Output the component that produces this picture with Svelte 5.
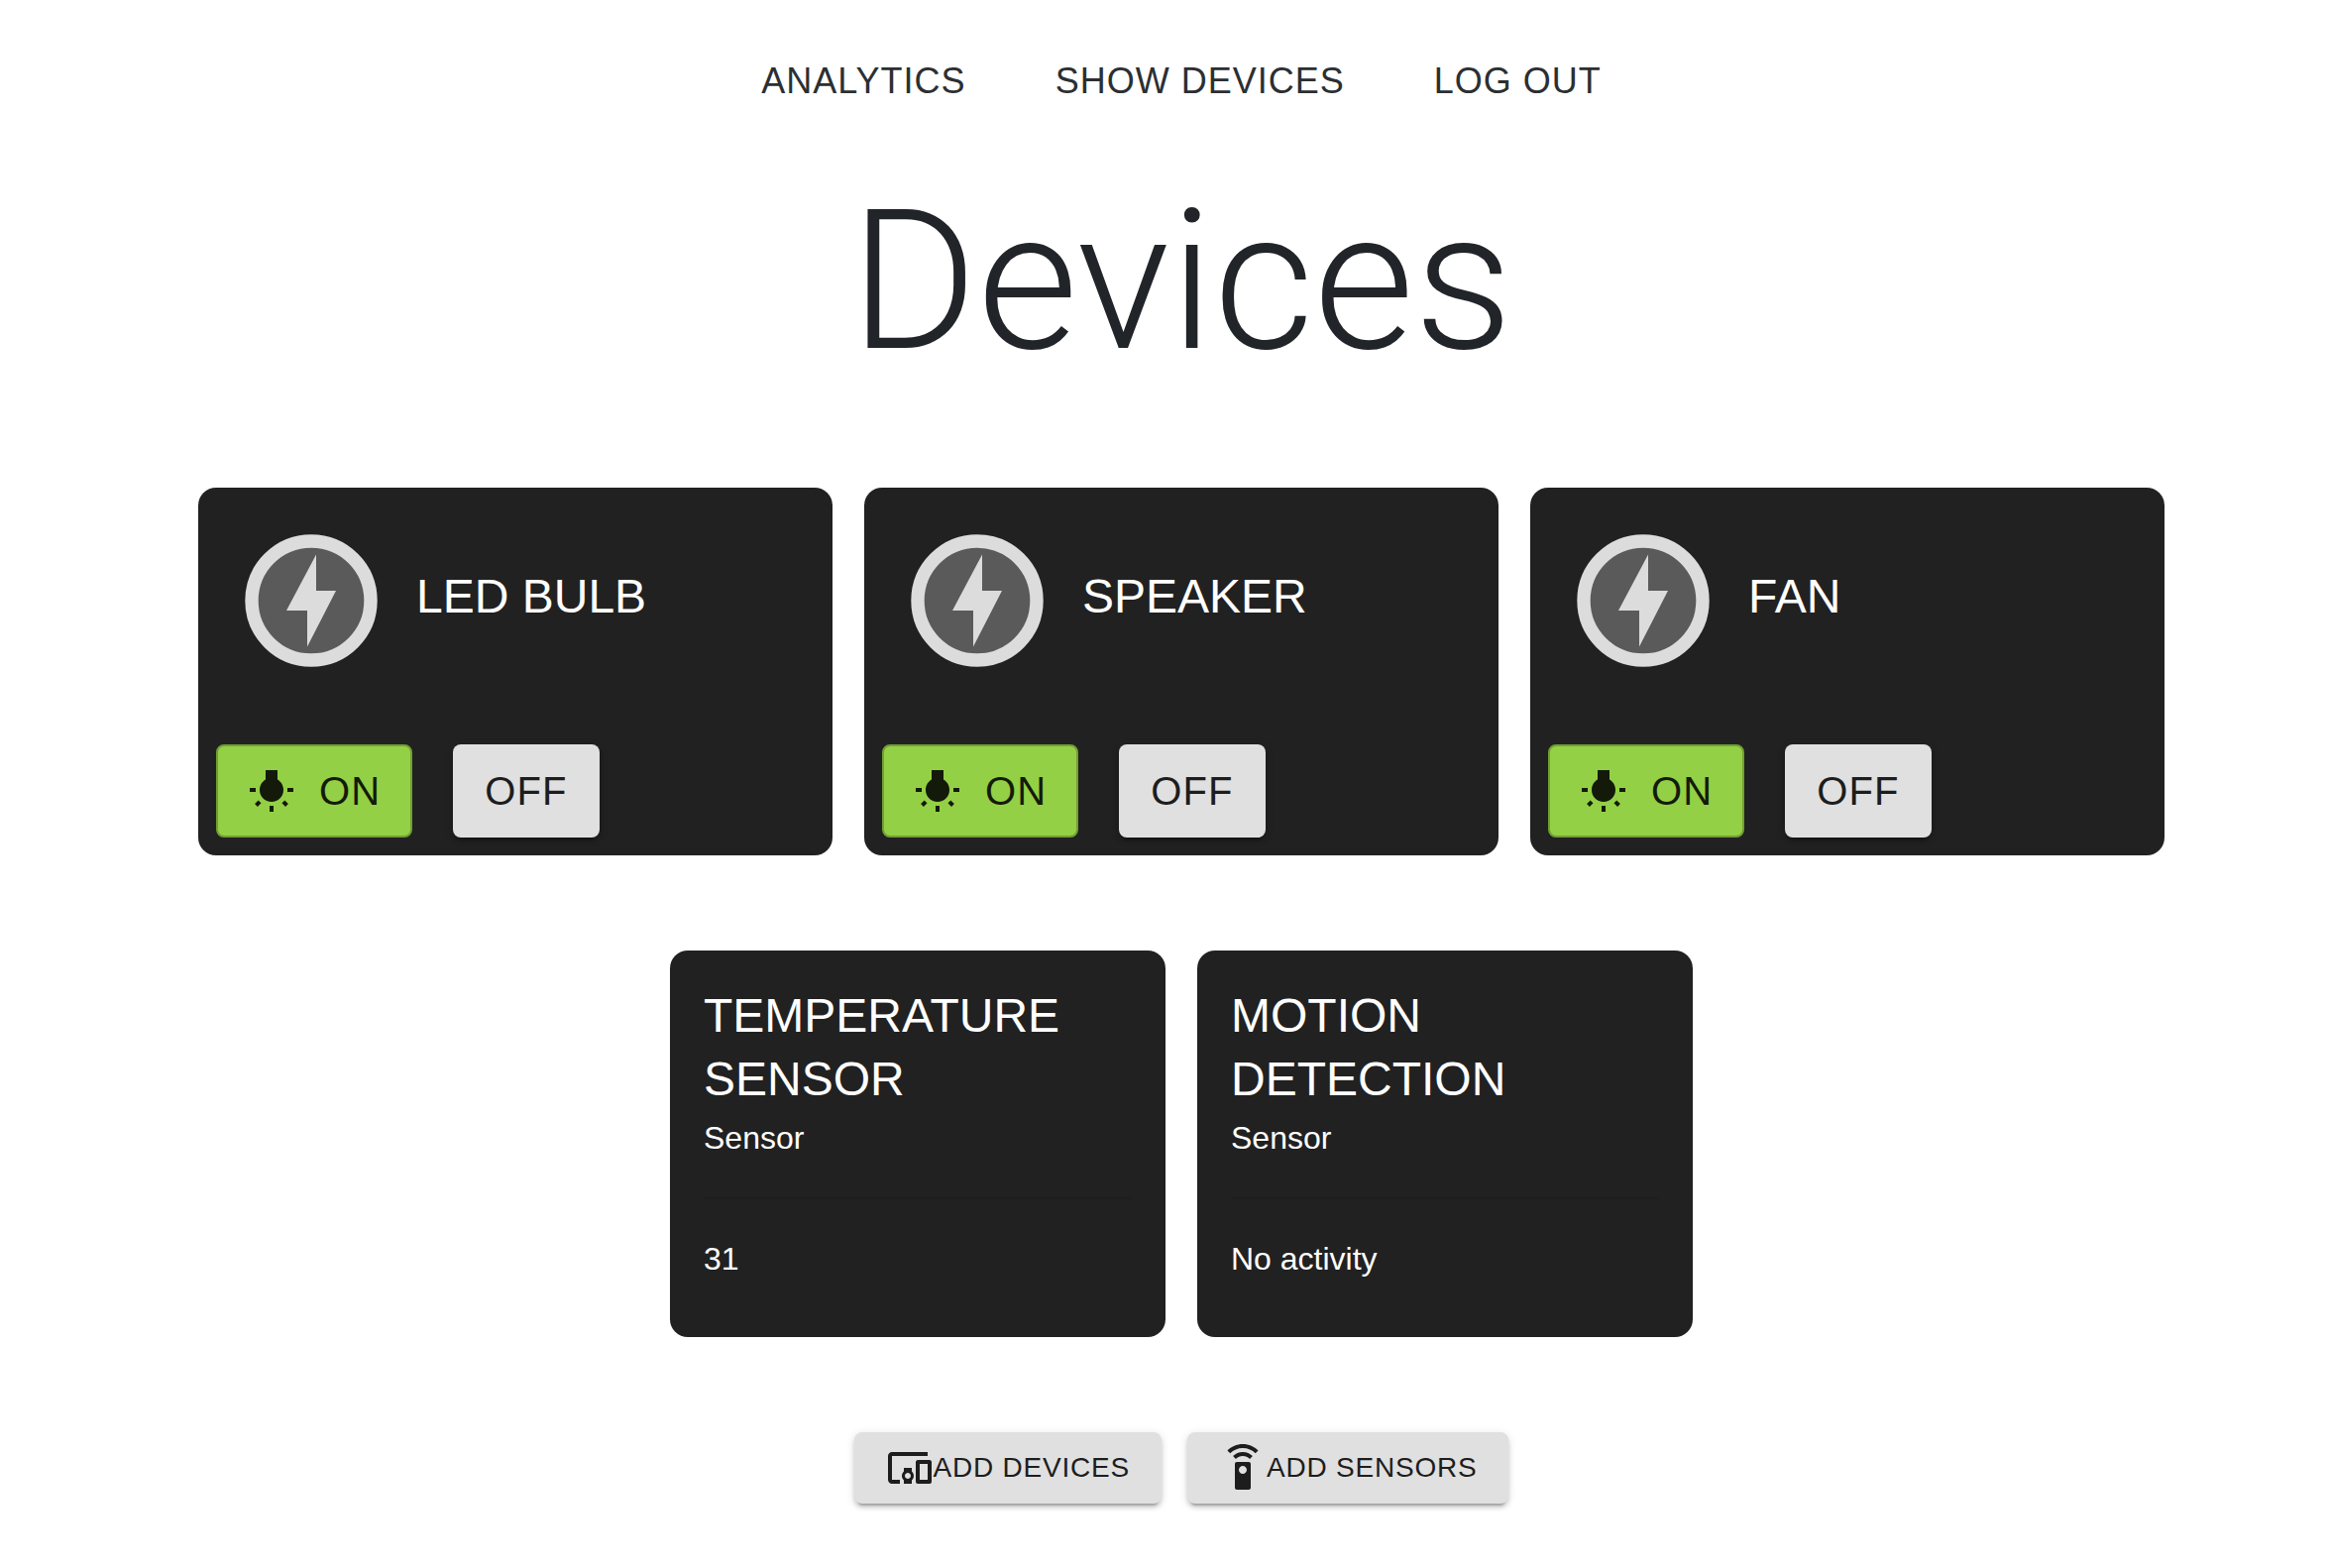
<script>
  let devices = $state([
    { name: 'LED BULB', on: true },
    { name: 'SPEAKER', on: true },
    { name: 'FAN', on: true }
  ]);

  const sensors = [
    { name: 'TEMPERATURE SENSOR', kind: 'Sensor', value: '31' },
    { name: 'MOTION DETECTION', kind: 'Sensor', value: 'No activity' }
  ];
</script>

<div class="page">
  <nav class="nav" aria-label="Main">
    <a href="#analytics">ANALYTICS</a>
    <a href="#devices">SHOW DEVICES</a>
    <a href="#logout">LOG OUT</a>
  </nav>

  <main>
    <h1>Devices</h1>

    <section class="devices" aria-label="Devices">
      {#each devices as device}
        <article class="card">
          <header class="device-head">
            <svg class="bolt" viewBox="0 0 160 160" aria-hidden="true">
              <circle cx="80" cy="80" r="60" fill="#5a5a5a" stroke="#dcdcdc" stroke-width="13.4" />
              <path d="M85 33.5V70H105L76 126.5V90H55Z" fill="#dcdcdc" />
            </svg>
            <h2 class="device-name">{device.name}</h2>
          </header>
          <div class="actions">
            <button class="btn on" type="button" onclick={() => (device.on = true)}>
              <svg class="icon" viewBox="0 0 24 24" aria-hidden="true">
                <path d="M3.55 18.54l1.41 1.41 1.79-1.8-1.41-1.41-1.79 1.8zM11 22.45h2V19.5h-2v2.95zM4 10.5H1v2h3v-2zm11-4.19V1.5H9v4.81C7.21 7.35 6 9.28 6 11.5c0 3.31 2.69 6 6 6s6-2.69 6-6c0-2.22-1.21-4.15-3-5.19zm5 4.19v2h3v-2h-3zm-2.76 7.66l1.79 1.8 1.41-1.41-1.8-1.79-1.4 1.4z" />
              </svg>
              ON
            </button>
            <button class="btn off" type="button" onclick={() => (device.on = false)}>OFF</button>
          </div>
        </article>
      {/each}
    </section>

    <section class="sensors" aria-label="Sensors">
      {#each sensors as sensor}
        <article class="card sensor">
          <h2>{sensor.name}</h2>
          <p>{sensor.kind}</p>
          <hr />
          <p>{sensor.value}</p>
        </article>
      {/each}
    </section>

    <div class="add">
      <button class="btn small" type="button">
        <svg class="icon" viewBox="0 0 24 24" aria-hidden="true">
          <path d="M3 6h18V4H3c-1.1 0-2 .9-2 2v12c0 1.1.9 2 2 2h4v-2H3V6zm10 6H9v1.78c-.61.55-1 1.33-1 2.22s.39 1.67 1 2.22V20h4v-1.78c.61-.55 1-1.34 1-2.22s-.39-1.67-1-2.22V12zm-2 5.5c-.83 0-1.5-.67-1.5-1.5s.67-1.5 1.5-1.5 1.5.67 1.5 1.5-.67 1.5-1.5 1.5zM22 8h-6c-.5 0-1 .5-1 1v10c0 .5.5 1 1 1h6c.5 0 1-.5 1-1V9c0-.5-.5-1-1-1zm-1 10h-4v-8h4v8z" />
        </svg>
        ADD DEVICES
      </button>
      <button class="btn small" type="button">
        <svg class="icon" viewBox="0 0 24 24" aria-hidden="true">
          <path d="M15 9H9c-.55 0-1 .45-1 1v12c0 .55.45 1 1 1h6c.55 0 1-.45 1-1V10c0-.55-.45-1-1-1zm-3 6c-1.1 0-2-.9-2-2s.9-2 2-2 2 .9 2 2-.9 2-2 2zM7.05 6.05l1.41 1.41C9.37 6.56 10.62 6 12 6s2.63.56 3.54 1.46l1.41-1.41C15.68 4.78 13.93 4 12 4s-3.68.78-4.95 2.05zM12 0C8.96 0 6.21 1.23 4.22 3.22l1.41 1.41C7.26 3.01 9.51 2 12 2s4.74 1.01 6.36 2.64l1.41-1.41C17.79 1.23 15.04 0 12 0z" />
        </svg>
        ADD SENSORS
      </button>
    </div>
  </main>
</div>

<style>
  :global(body) {
    background: #fff;
  }

  .page {
    box-sizing: border-box;
    padding: 50px 168px 64px 200px;
    color: #212529;
    font-family: 'Liberation Sans', Arial, Helvetica, sans-serif;
  }

  h1,
  h2,
  p {
    margin: 0;
    font-weight: 400;
  }

  .nav {
    display: flex;
    justify-content: center;
    gap: 90px;
    line-height: 64px;
    font-size: 36px;
    letter-spacing: 0.028em;
  }

  .nav a {
    color: #2c2f32;
    text-decoration: none;
  }

  h1 {
    margin: 58px 0 96px;
    font-family: Roboto, 'Liberation Sans', sans-serif;
    font-size: 196px;
    font-weight: 300;
    line-height: 224px;
    text-align: center;
  }

  .devices {
    display: grid;
    grid-template-columns: repeat(3, 1fr);
    gap: 32px;
  }

  .card {
    box-sizing: border-box;
    border-radius: 18px;
    background: #212121;
    color: #fff;
  }

  h2 {
    font-size: 48px;
    line-height: 64px;
  }

  .device-head {
    display: flex;
    align-items: center;
    gap: 26px;
    padding: 34px 34px 65px;
  }

  .device-name {
    padding-bottom: 8px;
  }

  .bolt {
    flex: none;
    width: 160px;
    height: 160px;
  }

  .actions {
    display: flex;
    gap: 41px;
    padding: 0 18px 18px;
  }

  .btn {
    display: flex;
    align-items: center;
    box-sizing: border-box;
    height: 94px;
    padding: 0 32px;
    border: 0;
    border-radius: 8px;
    background: #e0e0e0;
    color: #1d1d1d;
    font-family: inherit;
    font-size: 40px;
    letter-spacing: 0.028em;
    white-space: nowrap;
    cursor: pointer;
    box-shadow:
      0 6px 2px -4px rgba(0, 0, 0, 0.2),
      0 4px 4px 0 rgba(0, 0, 0, 0.14),
      0 2px 10px 0 rgba(0, 0, 0, 0.12);
  }

  .on {
    gap: 24px;
    padding: 0 30px;
    border: 2px solid #729f34;
    background: #93d045;
    color: #141a0a;
    box-shadow: none;
  }

  .small {
    height: 72px;
    font-size: 28px;
  }

  .icon {
    flex: none;
    width: 48px;
    height: 48px;
    fill: currentColor;
  }

  .sensors {
    display: flex;
    justify-content: center;
    gap: 32px;
    margin: 96px 0;
  }

  .sensor {
    flex: 0 1 500px;
    padding: 34px 34px 52px;
  }

  .sensor p {
    font-size: 32px;
    line-height: 54px;
  }

  hr {
    height: 2px;
    margin: 33px 0;
    border: 0;
    background: #1e1e1e;
  }

  .add {
    display: flex;
    justify-content: center;
    gap: 26px;
  }
</style>
